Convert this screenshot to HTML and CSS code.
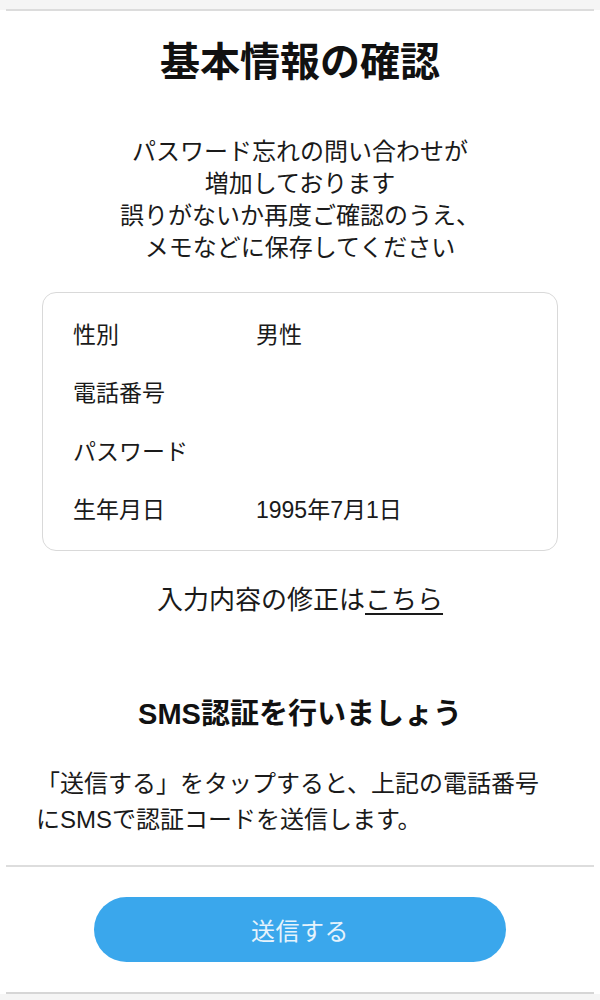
FILE: index.html
```html
<!DOCTYPE html>
<html lang="ja">
<head>
<meta charset="utf-8">
<title>基本情報の確認</title>
<link rel="stylesheet" href="styles.css">
</head>
<body>
<div class="topbar"><div class="topline"></div></div>
<main class="page">
  <h1 class="title">基本情報の確認</h1>
  <p class="lead">パスワード忘れの問い合わせが<br>増加しております<br>誤りがないか再度ご確認のうえ、<br>メモなどに保存してください</p>
  <div class="card">
    <div class="row"><span class="label">性別</span><span class="value">男性</span></div>
    <div class="row"><span class="label">電話番号</span><span class="value"></span></div>
    <div class="row"><span class="label">パスワード</span><span class="value"></span></div>
    <div class="row"><span class="label">生年月日</span><span class="value">1995年7月1日</span></div>
  </div>
  <p class="edit">入力内容の修正は<a class="edit-link" href="#">こちら</a></p>
  <h2 class="subtitle">SMS認証を行いましょう</h2>
  <p class="desc">「送信する」をタップすると、上記の電話番号<br>にSMSで認証コードを送信します。</p>
  <div class="divider"></div>
  <div class="actions"><button class="send" type="button">送信する</button></div>
  <div class="bottomline"></div>
</main>
<div class="bottombar"></div>
</body>
</html>
```

FILE: styles.css
```css
html, body {
  margin: 0;
  padding: 0;
  background: #ffffff;
}
body {
  font-family: "Liberation Sans", "Noto Sans CJK JP", sans-serif;
  color: #111111;
  width: 600px;
  height: 1000px;
  overflow: hidden;
}
.topbar {
  height: 10px;
  background: #f5f5f5;
  padding: 0 6px;
  display: flex;
  flex-direction: column;
  justify-content: flex-end;
}
.topline {
  height: 2px;
  background: #dcdcdc;
  margin-bottom: -1px;
}
.page {
  margin: 0 6px;
  display: flex;
  flex-direction: column;
}
.title {
  margin: 24px 0 0;
  font-size: 40px;
  line-height: 56px;
  font-weight: 700;
  text-align: center;
  letter-spacing: 0;
}
.lead {
  margin: 46px 0 0;
  font-size: 24px;
  line-height: 32px;
  text-align: center;
  color: #1a1a1a;
}
.card {
  margin: 28px 36px 0;
  border: 1px solid #d9d9d9;
  border-radius: 14px;
  padding: 11px 30px 13px;
}
.row {
  display: flex;
  height: 58.25px;
  align-items: center;
  font-size: 23px;
  color: #1a1a1a;
}
.label {
  width: 183px;
  flex: none;
}
.value {
  flex: 1;
}
.edit {
  margin: 31px 0 0;
  font-size: 26px;
  line-height: 36px;
  text-align: center;
  color: #1a1a1a;
}
.edit-link {
  color: inherit;
  text-decoration: underline;
  text-underline-offset: 4px;
  text-decoration-thickness: 2px;
}
.subtitle {
  margin: 76px 0 0;
  font-size: 29px;
  line-height: 40px;
  font-weight: 700;
  text-align: center;
}
.desc {
  margin: 32px 0 0;
  padding: 0 31px 0 30px;
  font-size: 24px;
  line-height: 36px;
  color: #1a1a1a;
}
.divider {
  margin-top: 27px;
  height: 2px;
  background: #dddddd;
}
.actions {
  display: flex;
  justify-content: center;
  padding: 30px 0 30px;
}
.send {
  width: 412px;
  height: 65px;
  border: none;
  border-radius: 33px;
  background: #3aa7ec;
  color: #e6f3fc;
  font-family: "Liberation Sans", "Noto Sans CJK JP", sans-serif;
  font-size: 24px;
  letter-spacing: 0.5px;
}
.bottomline {
  height: 2px;
  background: #d6d6d6;
}
.bottombar {
  height: 10px;
  background: #f5f5f5;
}
```
